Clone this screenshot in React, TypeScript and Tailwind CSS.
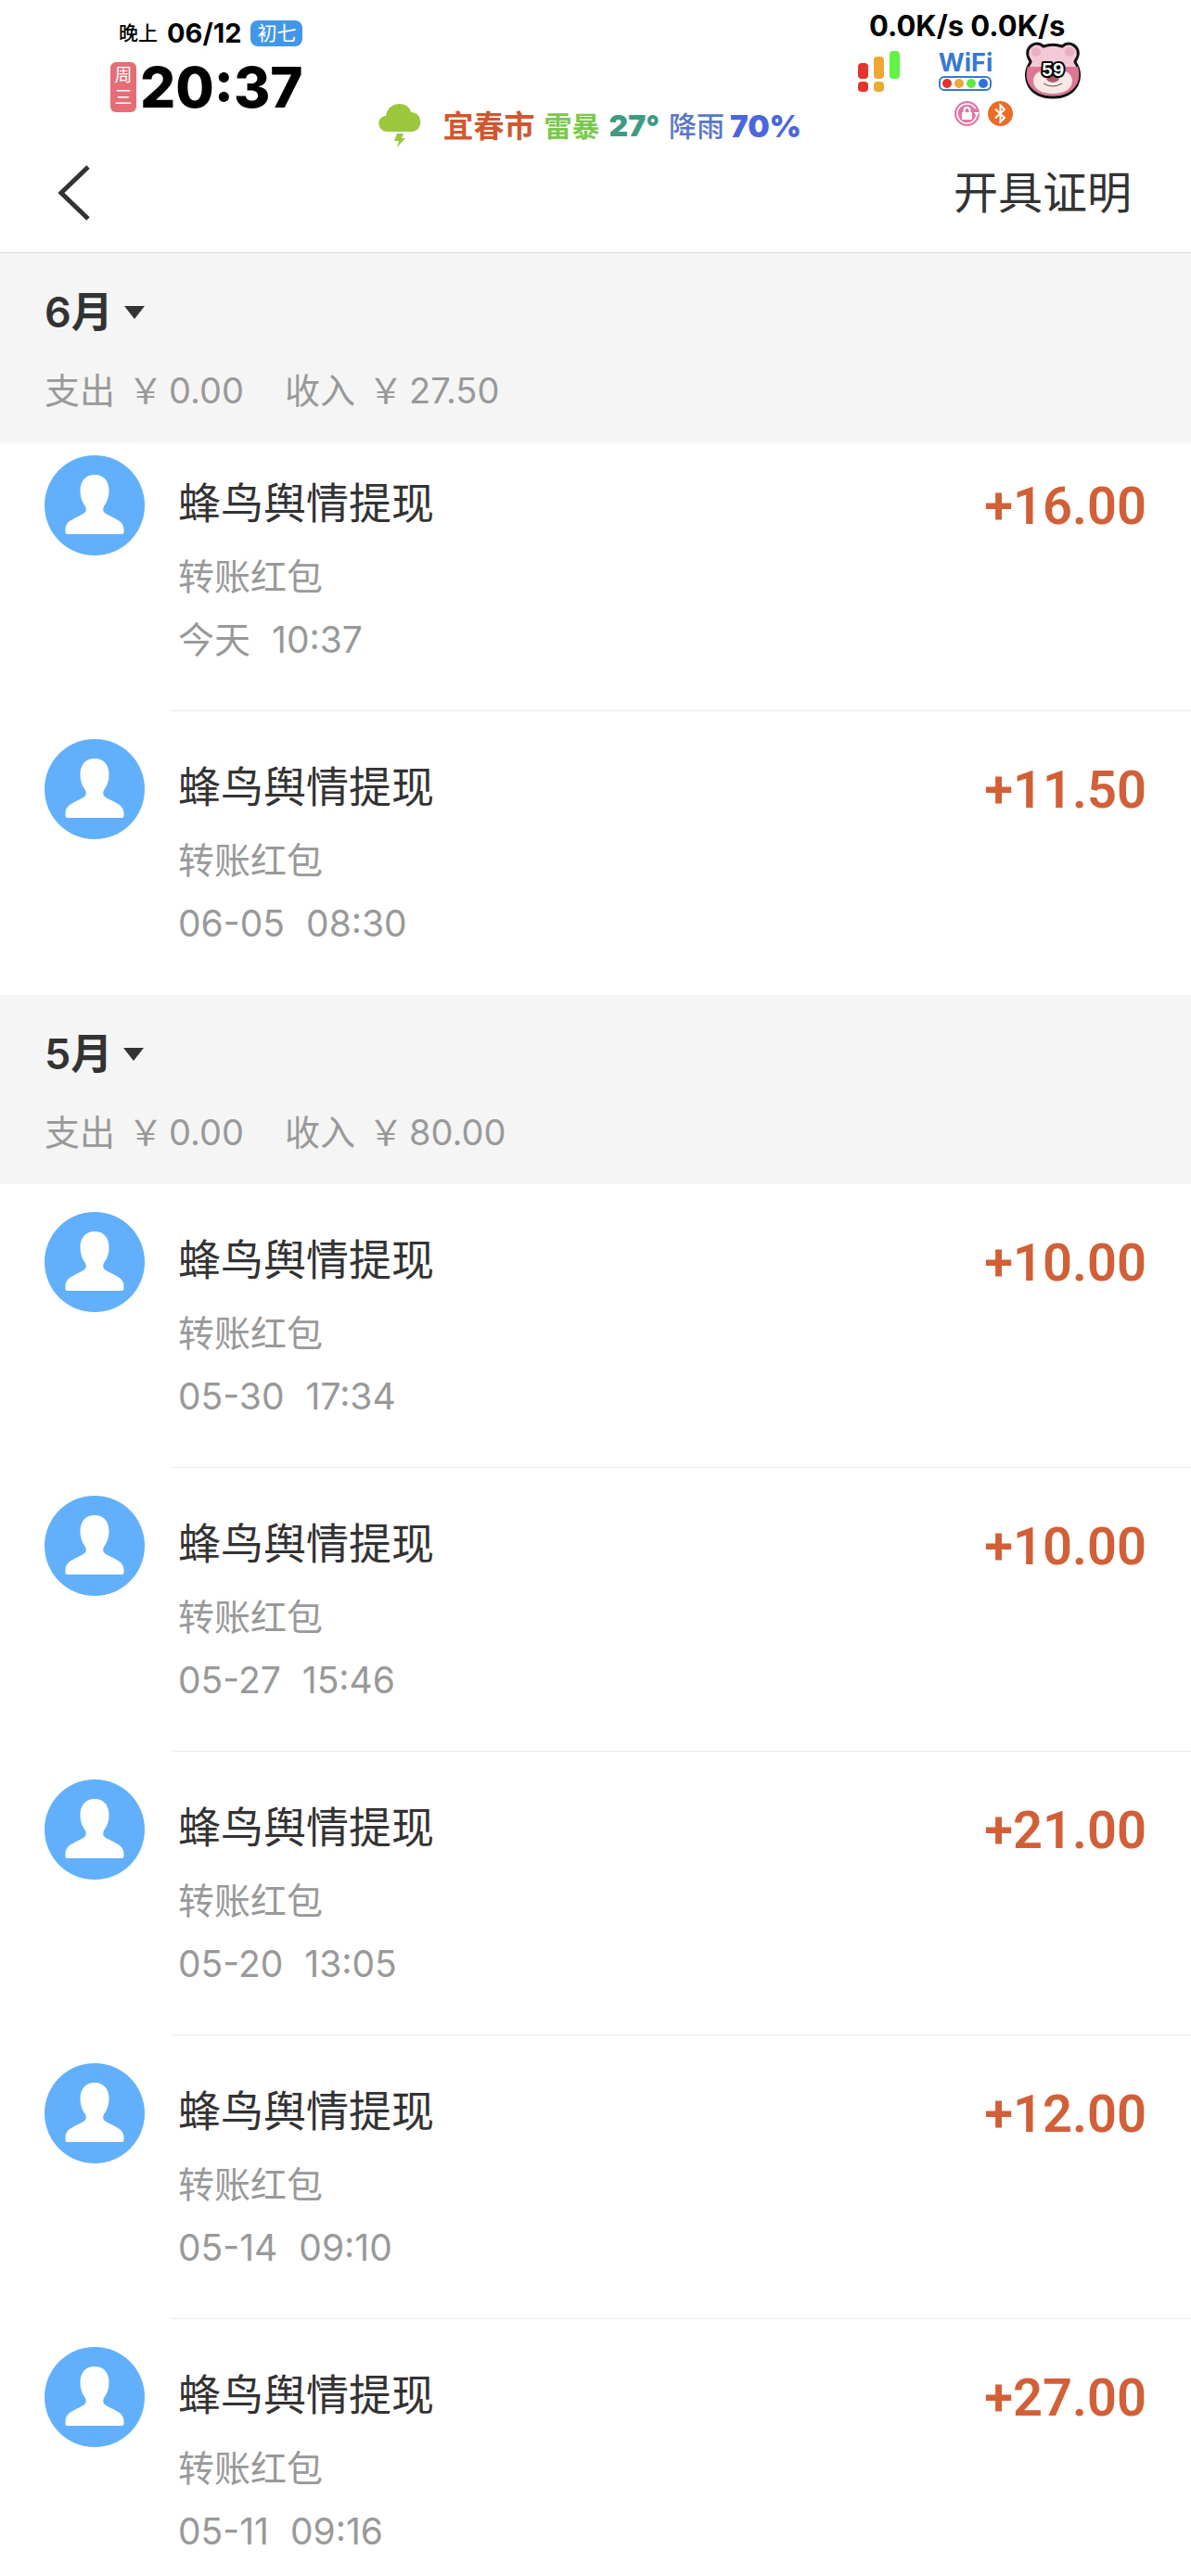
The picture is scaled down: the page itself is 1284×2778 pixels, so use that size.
import clsx from "clsx";

interface Transaction {
  id: number;
  title: string;
  category: string;
  date: string;
  time: string;
  amount: string;
}

interface MonthGroup {
  month: string;
  expense: string;
  income: string;
  compact?: boolean;
  items: Transaction[];
}

const TITLE = "蜂鸟舆情提现";
const CATEGORY = "转账红包";

const groups: MonthGroup[] = [
  {
    month: "6月",
    expense: "0.00",
    income: "27.50",
    compact: true,
    items: [
      { id: 1, title: TITLE, category: CATEGORY, date: "今天", time: "10:37", amount: "+16.00" },
      { id: 2, title: TITLE, category: CATEGORY, date: "06-05", time: "08:30", amount: "+11.50" },
    ],
  },
  {
    month: "5月",
    expense: "0.00",
    income: "80.00",
    items: [
      { id: 3, title: TITLE, category: CATEGORY, date: "05-30", time: "17:34", amount: "+10.00" },
      { id: 4, title: TITLE, category: CATEGORY, date: "05-27", time: "15:46", amount: "+10.00" },
      { id: 5, title: TITLE, category: CATEGORY, date: "05-20", time: "13:05", amount: "+21.00" },
      { id: 6, title: TITLE, category: CATEGORY, date: "05-14", time: "09:10", amount: "+12.00" },
      { id: 7, title: TITLE, category: CATEGORY, date: "05-11", time: "09:16", amount: "+27.00" },
    ],
  },
];

export default function App() {
  return (
    <div className="w-full bg-white font-['Inter','Noto_Sans_CJK_SC',sans-serif] text-[#333333]">
      <header className="border-b border-[#dcdcdc]">
        <StatusBar />
        <NavBar />
      </header>
      <main>
        {groups.map((group, index) => (
          <MonthSection
            key={group.month}
            group={group}
            isLast={index === groups.length - 1}
          />
        ))}
      </main>
    </div>
  );
}

function StatusBar() {
  return (
    <div className="flex h-[168px] items-start justify-between pl-[119px] pr-[114px] text-black">
      <div className="pt-[20px]">
        <div className="flex h-8 items-center gap-[10px] pl-[9px]">
          <span className="text-[21px] font-medium">晚上</span>
          <span className="text-[29px] font-bold">06/12</span>
          <span className="flex h-7 items-center rounded-lg bg-[#4297e6] px-[7px] text-[21px] text-white">
            初七
          </span>
        </div>
        <div className="flex items-center gap-1 pt-[14px]">
          <span className="flex h-[54px] w-7 flex-col items-center justify-center rounded-md bg-[#e66d76] text-[19px] leading-6 text-white">
            <span>周</span>
            <span>三</span>
          </span>
          <span className="text-[60px] font-extrabold leading-[56px]">20:37</span>
        </div>
      </div>

      <div className="flex items-center pl-5 pt-[112px] leading-[44px]">
        <StormIcon />
        <span className="ml-6 text-[33px] font-bold text-[#cf5830]">宜春市</span>
        <span className="ml-[10px] text-[30px] font-bold text-[#7ac74c]">雷暴</span>
        <span className="ml-[10px] text-[32px] font-black text-[#3e9a80]">27°</span>
        <span className="ml-[10px] text-[30px] font-medium text-[#5877c4]">降雨</span>
        <span className="ml-[6px] text-[33px] font-black text-[#4a68dc]">70%</span>
      </div>

      <div className="w-[245px] pt-[11px]">
        <p className="pl-3 text-[31px] font-bold leading-[34px]">0.0K/s 0.0K/s</p>
        <div className="flex items-start justify-between pr-[3px]">
          <SignalIcon />
          <div className="flex flex-col items-center pl-2 pt-[9px]">
            <span className="text-[27px] font-bold leading-7 text-[#3678d2]">WiFi</span>
            <WifiDots />
          </div>
          <BearBattery />
        </div>
        <div className="flex gap-[9px] pl-[104px] pt-[2px]">
          <LockBadge />
          <BluetoothBadge />
        </div>
      </div>
    </div>
  );
}

function NavBar() {
  return (
    <div className="flex h-[104px] items-center justify-between pb-[24px] pl-[60px] pr-[64px]">
      <button type="button" aria-label="返回">
        <svg width="40" height="60" viewBox="0 0 40 60" fill="none">
          <path d="M35 2 L6 30 L35 58" stroke="#333333" strokeWidth="5" />
        </svg>
      </button>
      <button type="button" className="text-[48px] leading-[60px]">
        开具证明
      </button>
    </div>
  );
}

function MonthSection({ group, isLast }: { group: MonthGroup; isLast: boolean }) {
  return (
    <section>
      <div className="bg-[#f5f5f5] px-[48px] pb-[28px] pt-[36px]">
        <h2>
          <button
            type="button"
            className="flex items-center gap-[12px] text-[45px] font-semibold leading-[56px]"
          >
            {group.month}
            <svg width="22" height="14" viewBox="0 0 22 14" fill="#333333">
              <path d="M0 0 H22 L11 14 Z" />
            </svg>
          </button>
        </h2>
        <div className="flex gap-[44px] pt-[28px]">
          <MonthTotal label="支出" value={group.expense} />
          <MonthTotal label="收入" value={group.income} />
        </div>
      </div>
      <ul>
        {group.items.map((item, index) => (
          <TransactionRow
            key={item.id}
            item={item}
            compact={Boolean(group.compact) && index === 0}
            divider={index < group.items.length - 1}
            end={isLast && index === group.items.length - 1}
          />
        ))}
      </ul>
    </section>
  );
}

function MonthTotal({ label, value }: { label: string; value: string }) {
  return (
    <p className="flex text-[38px] leading-[56px] text-[#999999]">
      <span className="mr-[14px]">{label}</span>
      <span className="mr-[6px]">￥</span>
      <span>{value}</span>
    </p>
  );
}

interface TransactionRowProps {
  item: Transaction;
  compact: boolean;
  divider: boolean;
  end: boolean;
}

function TransactionRow({ item, compact, divider, end }: TransactionRowProps) {
  return (
    <li className="flex pl-[48px]">
      <div className={compact ? "pt-[14px]" : "pt-[30px]"}>
        <Avatar />
      </div>
      <div
        className={clsx(
          "ml-7 flex flex-1 items-start justify-between border-b pl-2 pr-[48px]",
          divider ? "border-[#ebebeb]" : "border-transparent",
          compact ? "pt-[33px]" : "pt-[49px]",
          end ? "pb-[13px]" : "pb-[42px]",
        )}
      >
        <div>
          <p className="text-[46px] leading-[64px]">{item.title}</p>
          <p className="pt-[14px] text-[39px] leading-[68px] text-[#999999]">
            {item.category}
          </p>
          <p className="flex gap-[23px] text-[39px] leading-[68px] text-[#999999]">
            <span>{item.date}</span>
            <span>{item.time}</span>
          </p>
        </div>
        <p className="pt-[4px] font-['Roboto',sans-serif] text-[56px] font-semibold leading-[64px] text-[#d15f37]">
          {item.amount}
        </p>
      </div>
    </li>
  );
}

function Avatar() {
  return (
    <svg width="108" height="108" viewBox="0 0 108 108" className="shrink-0">
      <circle cx="54" cy="54" r="54" fill="#62b0fc" />
      <path
        d="M54 21 C64 21 69.500 28 69.500 38 C69.500 46 67 51 64 55 C62 60 64 62 68 64 C77 69 85.500 71 85.500 80 V83 Q85.500 85 83.500 85 H24.500 Q22.500 85 22.500 83 V80 C22.500 71 31 69 40 64 C44 62 46 60 44 55 C41 51 38.500 46 38.500 38 C38.500 28 44 21 54 21 Z"
        fill="#ffffff"
      />
    </svg>
  );
}

function StormIcon() {
  return (
    <svg width="46" height="48" viewBox="0 0 46 48" fill="#9bc73c">
      <path d="M10 30 C-2 30 -3 14 8 13 C10 -3 32 -4 35 9 C49 9 48 30 36 30 Z" />
      <path d="M20 32 H27 L25 37 H29 L20 47 L22 40 H17 Z" />
    </svg>
  );
}

function SignalIcon() {
  return (
    <svg width="46" height="46" viewBox="0 0 46 46" className="mt-[9px]">
      <rect x="0" y="14" width="11" height="17" rx="4" fill="#e5322b" />
      <rect x="0" y="34" width="11" height="11" rx="4" fill="#e5322b" />
      <rect x="17" y="7" width="11" height="24" rx="4" fill="#f0a733" />
      <rect x="17" y="34" width="11" height="11" rx="4" fill="#e8ac33" />
      <rect x="34" y="1" width="11" height="30" rx="4" fill="#62f443" />
    </svg>
  );
}

function WifiDots() {
  return (
    <svg width="57" height="16" viewBox="0 0 57 16">
      <rect x="1" y="1" width="55" height="14" rx="5" fill="#ffffff" stroke="#3678d2" strokeWidth="2" />
      <circle cx="9" cy="8" r="5" fill="#e5322b" />
      <circle cx="22" cy="8" r="5" fill="#eda73a" />
      <circle cx="35" cy="8" r="5" fill="#62e843" />
      <circle cx="48" cy="8" r="5" fill="#2c6fe0" />
    </svg>
  );
}

function BearBattery() {
  return (
    <svg width="64" height="62" viewBox="0 0 64 62">
      <path
        d="M22 5 C14 -2 3 5 5 15 C6 19 8 20 8 22 C-3 38 6 60 32 60 C58 60 67 38 56 22 C56 20 58 19 59 15 C61 5 50 -2 42 5 C36 3 28 3 22 5 Z"
        fill="#f3c9d8"
        stroke="#111111"
        strokeWidth="3"
      />
      <path d="M5 27 H59 C64 42 56 58 32 58 C8 58 0 42 5 27 Z" fill="#dd7594" />
      <path d="M32 32 C20 28 11 34 11 42 C11 51 20 56 32 56 C44 56 53 51 53 42 C53 34 44 28 32 32 Z" fill="#f8e9e6" />
      <ellipse cx="14" cy="11" rx="5" ry="5" fill="#e9aebf" />
      <ellipse cx="50" cy="11" rx="5" ry="5" fill="#e9aebf" />
      <ellipse cx="32" cy="39" rx="7" ry="5" fill="#b0586c" />
      <path d="M22 45 Q32 51 42 45" fill="none" stroke="#6b4a4a" strokeWidth="1" />
      <text
        x="32"
        y="37"
        textAnchor="middle"
        fontSize="19"
        fontWeight="700"
        fill="#ffffff"
        stroke="#000000"
        strokeWidth="4"
        strokeLinejoin="round"
        paintOrder="stroke"
      >
        59
      </text>
    </svg>
  );
}

function LockBadge() {
  return (
    <svg width="27" height="27" viewBox="0 0 27 27">
      <circle cx="13.500" cy="13.500" r="13.500" fill="#e078a6" />
      <circle cx="13.500" cy="13.500" r="10.500" fill="none" stroke="#ffffff" strokeWidth="1.500" strokeDasharray="60 6" />
      <path d="M21 12 H27 L24 16 Z" fill="#ffffff" />
      <rect x="8" y="12" width="11" height="8" rx="1" fill="#ffffff" />
      <path d="M10.500 12 V10 a3 3 0 0 1 6 0 V12" fill="none" stroke="#ffffff" strokeWidth="2" />
    </svg>
  );
}

function BluetoothBadge() {
  return (
    <svg width="27" height="27" viewBox="0 0 27 27">
      <circle cx="13.500" cy="13.500" r="13.500" fill="#eb6b27" />
      <path
        d="M8 8.500 L18 18 L13.500 22.500 V4.500 L18 9 L8 18.500"
        fill="none"
        stroke="#ffffff"
        strokeWidth="2"
      />
    </svg>
  );
}
